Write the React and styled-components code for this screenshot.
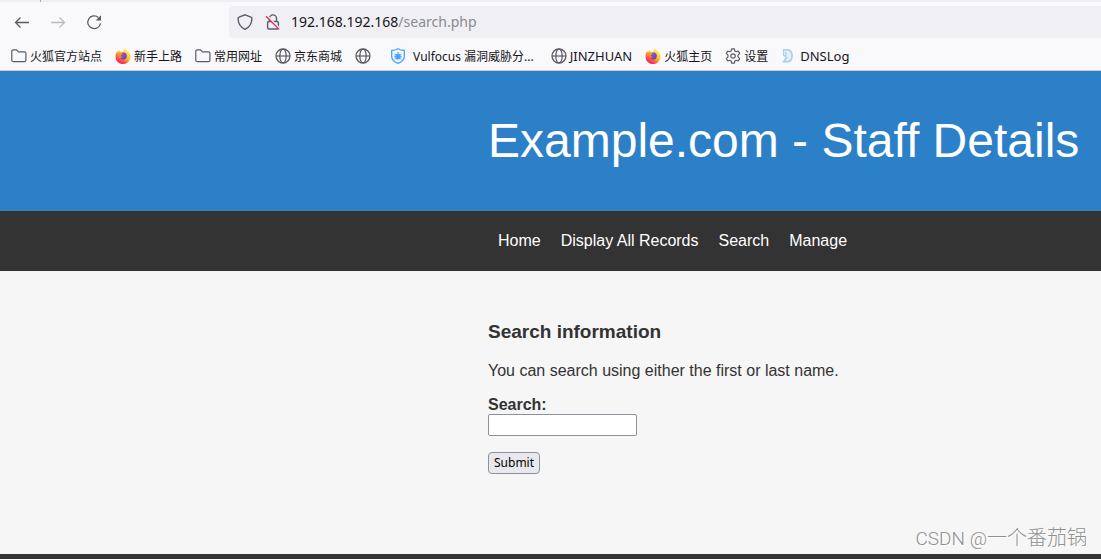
import React from "react";
import styled, { createGlobalStyle } from "styled-components";

const App = () => {
  return (
    <Page>
      <GlobalStyle />
      <Chrome />
      <Banner>
        <h1>Example.com - Staff Details</h1>
      </Banner>
      <SiteNav>
        <a href="/index.php">Home</a>
        <a href="/display.php">Display All Records</a>
        <a href="/search.php">Search</a>
        <a href="/manage.php">Manage</a>
      </SiteNav>
      <Content>
        <h3>Search information</h3>
        <p>You can search using either the first or last name.</p>
        <SearchForm onSubmit={(e) => e.preventDefault()}>
          <label htmlFor="search">Search:</label>
          <input id="search" name="search" type="text" />
          <button type="submit">Submit</button>
        </SearchForm>
      </Content>
      <Footer />
      <Watermark>
        <span>CSDN @</span>一个番茄锅
      </Watermark>
    </Page>
  );
};

export default App;

const bookmarks = [
  { icon: "folder", label: "火狐官方站点" },
  { icon: "firefox", label: "新手上路" },
  { icon: "folder", label: "常用网址" },
  { icon: "globe", label: "京东商城" },
  { icon: "globe", label: "" },
  { icon: "shield", label: "Vulfocus 漏洞威胁分...", wide: true },
  { icon: "globe", label: "JINZHUAN", latin: true },
  { icon: "firefox", label: "火狐主页" },
  { icon: "gear", label: "设置" },
  { icon: "dnslog", label: "DNSLog", latin: true },
];

const Chrome = () => {
  return (
    <Browser>
      <TabStrip>
        <Tab />
      </TabStrip>
      <Toolbar>
        <ToolButtons>
          <ToolButton type="button" aria-label="Back">
            <ArrowIcon />
          </ToolButton>
          <ToolButton type="button" aria-label="Forward" disabled>
            <ArrowIcon flip />
          </ToolButton>
          <ToolButton type="button" aria-label="Reload">
            <ReloadIcon />
          </ToolButton>
        </ToolButtons>
        <AddressBar>
          <TrackingIcon />
          <InsecureIcon />
          <Url>
            192.168.192.168<span>/search.php</span>
          </Url>
        </AddressBar>
      </Toolbar>
      <BookmarkBar>
        {bookmarks.map(({ icon, label, wide, latin }, i) => {
          const BookmarkIcon = icons[icon];
          return (
            <Bookmark
              key={i}
              href="#"
              aria-label={label || "Bookmark"}
              $wide={wide}
              $latin={latin}
            >
              <BookmarkIcon />
              <span>{label}</span>
            </Bookmark>
          );
        })}
      </BookmarkBar>
    </Browser>
  );
};

const ArrowIcon = ({ flip }) => (
  <Icon viewBox="0 0 16 16">
    <path
      d={flip ? "M1 8.500h13.500M9.500 3.500l5 5-5 5" : "M15 8.500H1.500M6.500 3.500l-5 5 5 5"}
      strokeWidth="1.3"
    />
  </Icon>
);

const ReloadIcon = () => (
  <Icon viewBox="0 0 16 16">
    <path d="M12.4 3.4A6.4 6.4 0 1 0 14.500 9.300" strokeWidth="1.3" />
    <path d="M15 1.200v5.300H9.700z" fill="currentColor" stroke="none" />
  </Icon>
);

const TrackingIcon = () => (
  <Icon viewBox="0 0 16 16">
    <path
      d="M8 .8 14 3.1c.6.2.9.6.9 1.2 0 4.7-1.6 8.7-6.9 11-5.3-2.3-6.9-6.3-6.9-11 0-.6.3-1 .9-1.2z"
      strokeWidth="1.4"
    />
  </Icon>
);

const InsecureIcon = () => (
  <Icon viewBox="0 0 16 16">
    <path d="M4.500 7V4.400a3.500 3.500 0 0 1 7 0V7" strokeWidth="1.400" />
    <rect x="2.600" y="7.500" width="10.800" height="7.500" rx="1.300" strokeWidth="1.400" />
    <path d="M1.500 1.500 15 15" stroke="#f0f0f4" strokeWidth="2" />
    <path d="M1 2.200 14.200 15.400" stroke="#e22850" strokeWidth="1.300" />
  </Icon>
);

const FolderIcon = () => (
  <Icon viewBox="0 0 16 16">
    <path
      d="M.8 12.2V3.3c0-.9.6-1.500 1.500-1.500h3.200l2 2h5.900c.9 0 1.500.6 1.500 1.500v6.900c0 .9-.6 1.500-1.500 1.500H2.300c-.9 0-1.500-.6-1.500-1.500z"
      strokeWidth="1.2"
    />
  </Icon>
);

const GlobeIcon = () => (
  <Icon viewBox="0 0 16 16">
    <circle cx="8" cy="8" r="7" strokeWidth="1.3" />
    <ellipse cx="8" cy="8" rx="3.2" ry="7" strokeWidth="1.2" />
    <path d="M1 8h14" strokeWidth="1.2" />
  </Icon>
);

const GearIcon = () => (
  <Icon viewBox="0 0 16 16">
    <path
      d="M6.600.8h2.800l.4 2.100 1.400.8 2-.7 1.500 2.400L13 7.100v1.800l1.700 1.700-1.500 2.400-2-.7-1.400.8-.4 2.100H6.600l-.4-2.100-1.400-.8-2 .7-1.500-2.400L3 8.900V7.100L1.300 5.400 2.800 3l2 .7 1.400-.8z"
      strokeWidth="1.2"
      strokeLinejoin="round"
    />
    <circle cx="8" cy="8" r="2.200" strokeWidth="1.2" />
  </Icon>
);

const FirefoxIcon = () => (
  <Icon viewBox="0 0 16 16" stroke="none">
    <defs>
      <linearGradient id="flame" x1="0.8" y1="0.1" x2="0.25" y2="0.95">
        <stop offset="0" stopColor="#fff44f" />
        <stop offset="0.4" stopColor="#ffc62e" />
        <stop offset="0.65" stopColor="#ff7a2f" />
        <stop offset="0.85" stopColor="#ff3a50" />
        <stop offset="1" stopColor="#f5156c" />
      </linearGradient>
      <radialGradient id="world" cx="0.6" cy="0.3" r="0.8">
        <stop offset="0" stopColor="#8a4be8" />
        <stop offset="1" stopColor="#5a3fd0" />
      </radialGradient>
    </defs>
    <path
      d="M10.300 0c.3 1.600 1.300 2.500 2.300 3.300 1.700 1.300 3 2.900 3 5.200a7.500 7.500 0 0 1-15.100.2c0-2.300.6-4.200 1.900-5.700.1.600.3 1 .6 1.300.4-1 .9-1.700 1.700-2.200 0 .8.300 1.300.9 1.800 1-.1 2 .1 2.700.5C8.300 2.600 9.200 1 10.300 0z"
      fill="url(#flame)"
    />
    <circle cx="8.400" cy="8" r="3.400" fill="url(#world)" />
    <path
      d="M3.400 5.300c1.400-.8 3.300-.5 4.500.6-.4.900-1.700.8-2.100 1.500-.1 1 1 1.700 2.400 1.300-.8 1.400-2.500 1.400-3.700.4-1-.9-1.400-2.300-1.100-3.800z"
      fill="#ff9422"
    />
  </Icon>
);

const BadgeIcon = () => (
  <Icon viewBox="0 0 16 16" stroke="#4da3f5">
    <path
      d="M8 .8c1.700 1.200 3.800 1.700 6.300 1.700v6c0 3.200-2.600 5.400-6.300 6.800-3.700-1.400-6.300-3.600-6.300-6.800v-6c2.500 0 4.600-.5 6.300-1.700z"
      strokeWidth="1.300"
    />
    <ellipse cx="8" cy="8.500" rx="2.700" ry="3.100" fill="#4da3f5" stroke="none" />
    <path
      d="M4.200 6 6 7M11.800 6 10 7M4 8.700h8M4.400 11.300l1.800-1M11.600 11.300l-1.800-1M6.800 4.600h2.400"
      strokeWidth="0.800"
    />
  </Icon>
);

const DnslogIcon = () => (
  <Icon viewBox="0 0 16 16" stroke="none">
    <path
      d="M1.800 1.500h4.700c3.600.4 5.300 2.700 5.300 6.200 0 3.900-2.300 6.700-6.500 6.800H1.800l1.500-2.200V9L1.800 7z"
      fill="#e3f0f8"
    />
    <path
      d="M2 1.800h4.200c3.300.3 4.900 2.600 4.900 5.900 0 3.500-2 6.100-5.600 6.100H2.600l3.600-4.500"
      stroke="#a9cfe8"
      strokeWidth="1.600"
    />
    <path d="M2.600 2v5.300l2.200 1.200V4" stroke="#a9cfe8" strokeWidth="1.200" />
  </Icon>
);

const icons = {
  folder: FolderIcon,
  firefox: FirefoxIcon,
  globe: GlobeIcon,
  shield: BadgeIcon,
  gear: GearIcon,
  dnslog: DnslogIcon,
};

const GlobalStyle = createGlobalStyle`
  * {
    box-sizing: border-box;
  }
  body {
    margin: 0;
    background: #f6f6f6;
    color: #333;
    font-family: "Liberation Sans", Arial, sans-serif;
    font-size: 16px;
  }
`;

const Page = styled.div`
  position: relative;
  display: flex;
  flex-direction: column;
  min-height: 100vh;
`;

const Icon = styled.svg.attrs((props) => ({
  stroke: props.stroke || "currentColor",
  fill: "none",
  "aria-hidden": true,
}))`
  flex: none;
  width: 16px;
  height: 16px;
`;

const Browser = styled.header`
  background: #f9f9fb;
  border-bottom: 1px solid #ccc;
  color: #15141a;
  font-family: "Noto Sans", "Noto Sans CJK SC", sans-serif;
`;

const TabStrip = styled.div`
  height: 2px;
  padding-left: 40px;
  background: #f0f0f4;
`;

const Tab = styled.div`
  width: 226px;
  height: 2px;
  border-left: 1px solid #aaa;
`;

const Toolbar = styled.div`
  display: flex;
  align-items: center;
  padding: 4px 0;
`;

const ToolButtons = styled.div`
  display: flex;
  flex: none;
  gap: 20px;
  width: 229px;
  padding-left: 14px;
`;

const ToolButton = styled.button`
  display: flex;
  padding: 0;
  border: 0;
  background: none;
  color: #5b5b66;
  &:disabled {
    color: #bbbbc1;
  }
`;

const AddressBar = styled.div`
  display: flex;
  flex: 1;
  align-items: center;
  gap: 12px;
  height: 32px;
  padding-left: 8px;
  border-radius: 4px 0 0 4px;
  background: #f0f0f4;
  color: #5b5b66;
`;

const Url = styled.div`
  margin-left: -2px;
  color: #15141a;
  font-size: 14px;
  line-height: 18px;
  span {
    color: #8a8a90;
  }
`;

const BookmarkBar = styled.nav`
  display: flex;
  gap: 13px;
  height: 28px;
  padding: 0 11px;
`;

const Bookmark = styled.a`
  display: flex;
  align-items: center;
  gap: ${(props) => (props.$wide ? "7px" : "3px")};
  padding-right: ${(props) => (props.$wide ? "4px" : "0")};
  color: #15141a;
  font-size: ${(props) => (props.$latin ? "13px" : "12px")};
  white-space: nowrap;
  text-decoration: none;
  svg {
    color: #5b5b66;
  }
  span {
    min-width: 3px;
  }
`;

const Banner = styled.div`
  height: 140px;
  padding: 42px 0 0 488px;
  background: #2c80c8;
  color: #fff;
  h1 {
    margin: 0;
    font-size: 48px;
    font-weight: 400;
    line-height: 55px;
    white-space: nowrap;
  }
`;

const SiteNav = styled.nav`
  display: flex;
  align-items: center;
  gap: 20px;
  height: 60px;
  padding-left: 498px;
  background: #333;
  a {
    color: #fff;
    text-decoration: none;
  }
`;

const Content = styled.main`
  flex: 1;
  padding: 50px 0 80px 488px;
  h3 {
    margin: 0 0 20px;
    font-size: 19px;
    line-height: 21px;
  }
  p {
    margin: 0 0 16px;
    line-height: 18px;
  }
`;

const SearchForm = styled.form`
  display: flex;
  flex-direction: column;
  align-items: flex-start;
  label {
    font-weight: 700;
    line-height: 18px;
  }
  input {
    width: 149px;
    height: 22px;
    margin-bottom: 16px;
    border: 1px solid #8f8f9d;
    border-radius: 2px;
    background: #fff;
  }
  button {
    height: 22px;
    padding: 0 5px;
    border: 1px solid #8f8f9d;
    border-radius: 4px;
    background: #e9e9ed;
    color: #000;
    font-family: "Noto Sans", sans-serif;
    font-size: 12px;
    line-height: 20px;
  }
`;

const Footer = styled.footer`
  height: 5px;
  background: #333;
`;

const Watermark = styled.div`
  position: absolute;
  right: 14px;
  bottom: 5px;
  color: #909090;
  font-family: "Noto Sans CJK SC", sans-serif;
  font-size: 20px;
  font-weight: 300;
  line-height: 30px;
  text-shadow: 1px 1px 0 #fff;
  span {
    font-family: Roboto, sans-serif;
    font-size: 19px;
  }
`;
